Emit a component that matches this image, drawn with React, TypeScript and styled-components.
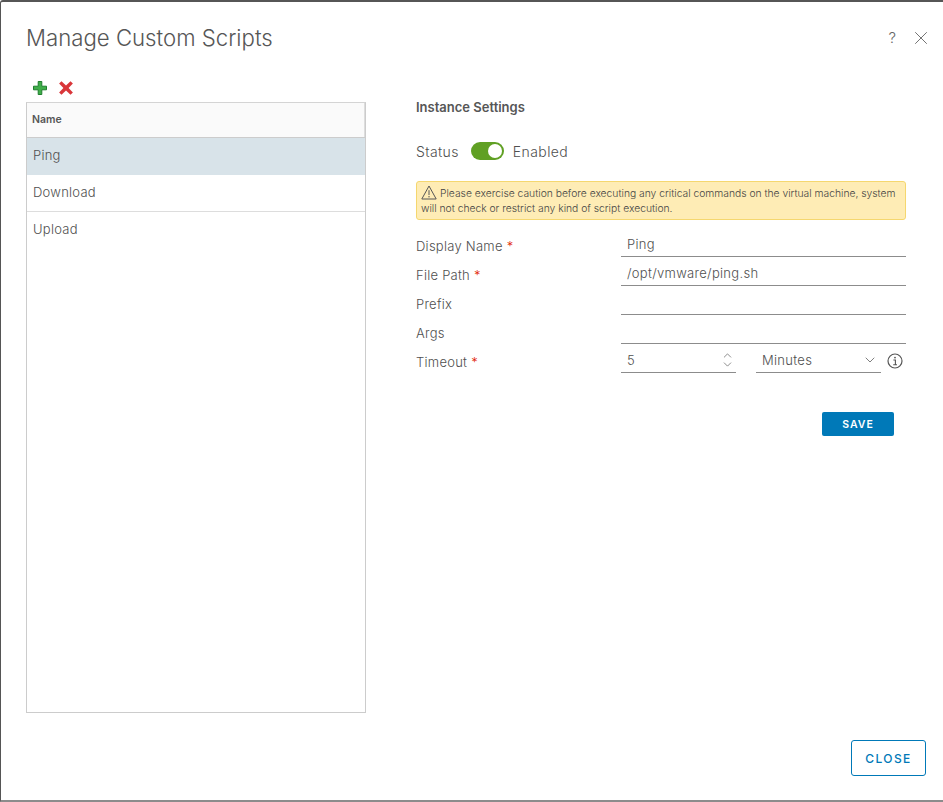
import React from "react";
import styled, { createGlobalStyle } from "styled-components";
import { ChevronDown, ChevronUp, X } from "lucide-react";

const GlobalStyle = createGlobalStyle`
  html, body {
    margin: 0;
    padding: 0;
    background: #fff;
  }
  * {
    box-sizing: border-box;
  }
`;

const Frame = styled.div`
  width: 943px;
  height: 802px;
  display: flex;
  flex-direction: column;
  background: #fff;
  border-top: 2px solid #565656;
  border-left: 1px solid #555;
  border-bottom: 2px solid #8c8c8c;
  border-top-left-radius: 3px;
  font-family: "Inter", "Liberation Sans", sans-serif;
  color: #505050;
  overflow: hidden;
`;

const Header = styled.header`
  height: 72px;
  flex: none;
  display: flex;
  align-items: center;
  justify-content: space-between;
  padding: 0 11px 1px 25px;
`;

const Title = styled.h1`
  margin: 0;
  font-size: 22.2px;
  font-weight: 300;
  color: #565656;
`;

const HeaderIcons = styled.div`
  display: flex;
  align-items: center;
  gap: 14px;
  color: #666;
  font-size: 15px;
  font-weight: 300;
`;

const Body = styled.div`
  flex: 1;
  min-height: 0;
  display: flex;
  gap: 50px;
  padding-left: 25px;
`;

const LeftColumn = styled.section`
  width: 340px;
  display: flex;
  flex-direction: column;
`;

const Toolbar = styled.div`
  height: 28px;
  display: flex;
  align-items: center;
  gap: 10px;
  padding-left: 6px;
`;

const Grid = styled.div`
  height: 611px;
  border: 1px solid #ccc;
  border-top-color: #d4d4d4;
  display: flex;
  flex-direction: column;
`;

const GridHead = styled.div`
  height: 35px;
  flex: none;
  display: flex;
  align-items: center;
  padding: 0 0 1px 5px;
  background: #fafafa;
  border-bottom: 1px solid #ccc;
  font-size: 10.5px;
  font-weight: 600;
  color: #565656;
  box-shadow: inset -1px 0 0 #ddd;
`;

const GridRow = styled.div<{ $selected?: boolean }>`
  height: 37px;
  flex: none;
  display: flex;
  align-items: center;
  padding: 0 0 3px 6px;
  font-size: 13px;
  font-weight: 300;
  letter-spacing: 0.25px;
  background: ${(p) => (p.$selected ? "#d8e3e9" : "#fff")};
  border-bottom: ${(p) => (p.$selected ? "none" : "1px solid #ddd")};
  &:last-child {
    border-bottom: none;
  }
`;

const RightColumn = styled.section`
  width: 490px;
  display: flex;
  flex-direction: column;
  padding-top: 24px;
`;

const SectionTitle = styled.h2`
  margin: 0;
  font-size: 13px;
  line-height: 18px;
  font-weight: 600;
  color: #565656;
`;

const StatusRow = styled.div`
  display: flex;
  align-items: center;
  height: 20px;
  margin-top: 25px;
  font-size: 14px;
  font-weight: 300;
  letter-spacing: 0.4px;
`;

const Toggle = styled.span`
  width: 33px;
  height: 18px;
  margin: 0 9px 0 12px;
  border-radius: 9px;
  background: #60a024;
  display: flex;
  align-items: center;
  justify-content: flex-end;
  padding-right: 2px;
  &::after {
    content: "";
    width: 14px;
    height: 14px;
    border-radius: 50%;
    background: #fff;
  }
`;

const Alert = styled.div`
  margin-top: 20px;
  height: 39px;
  padding: 3px 4px 0 4px;
  background: #feecb5;
  border: 1px solid #f5d76f;
  border-radius: 3px;
  font-size: 10.3px;
  font-weight: 300;
  line-height: 15px;
  color: #444;
`;

const AlertIcon = styled.svg`
  width: 16px;
  height: 15px;
  vertical-align: -3px;
  margin-right: 3px;
`;

const Form = styled.div`
  margin-top: 8px;
  display: flex;
  flex-direction: column;
`;

const FormRow = styled.div`
  height: 29px;
  display: grid;
  grid-template-columns: 205px 285px;
  align-items: stretch;
`;

const Label = styled.label`
  font-size: 13px;
  font-weight: 300;
  letter-spacing: 0.25px;
  align-self: end;
  padding-bottom: 2px;
  line-height: 18px;
`;

const Req = styled.span`
  color: #e12200;
  margin-left: 4px;
`;

const Underlined = styled.div<{ $width?: number }>`
  width: ${(p) => (p.$width ? `${p.$width}px` : "auto")};
  display: flex;
  align-items: center;
  justify-content: space-between;
  padding: 3px 6px 0;
  border-bottom: 1px solid #8c8c8c;
  font-size: 13px;
  font-weight: 300;
  letter-spacing: 0.3px;
  line-height: 18px;
`;

const TimeoutFields = styled.div`
  display: flex;
  align-items: stretch;
`;

const Stepper = styled.span`
  display: flex;
  flex-direction: column;
  margin: 0 -4px 0 0;
  color: #505050;
  & > svg + svg {
    margin-top: -4px;
  }
`;

const UnitChevron = styled(ChevronDown)`
  margin-right: -3px;
  color: #505050;
`;

const UnitField = styled(Underlined)`
  margin-left: 20px;
`;

const InfoIcon = styled.svg`
  width: 16px;
  height: 16px;
  margin: 4px 0 0 6px;
  align-self: center;
`;

const SaveRow = styled.div`
  display: flex;
  justify-content: flex-end;
  margin-top: 39px;
  padding-right: 12px;
`;

const SaveButton = styled.button`
  width: 72px;
  height: 24px;
  border: none;
  border-radius: 2px;
  background: #0079b8;
  color: #fff;
  font-family: inherit;
  font-size: 10.5px;
  font-weight: 600;
  letter-spacing: 1px;
  padding: 0;
`;

const Footer = styled.footer`
  height: 60px;
  flex: none;
  display: flex;
  justify-content: flex-end;
  padding: 0 17px 0 0;
  align-items: flex-start;
`;

const CloseButton = styled.button`
  width: 75px;
  height: 36px;
  border: 1px solid #0079b8;
  border-radius: 3px;
  background: #fff;
  color: #0079b8;
  font-family: inherit;
  font-size: 12px;
  font-weight: 500;
  letter-spacing: 1.4px;
  padding: 0;
`;

function App() {
  return (
    <Frame>
      <GlobalStyle />
      <Header>
        <Title>Manage Custom Scripts</Title>
        <HeaderIcons>
          <span>?</span>
          <X size={22} strokeWidth={1} />
        </HeaderIcons>
      </Header>
      <Body>
        <LeftColumn>
          <Toolbar>
            <svg width="16" height="16" viewBox="0 0 16 16">
              <path
                d="M6.2 1.5h3.6v4.7h4.7v3.6H9.8v4.7H6.2V9.8H1.5V6.2h4.7z"
                fill="#3fae49"
                stroke="#1e7d2d"
                strokeWidth="1"
              />
            </svg>
            <svg width="16" height="16" viewBox="0 0 16 16">
              <path
                d="M3.5 1.2 8 5.4l4.5-4.2 2.4 2.4L10.6 8l4.3 4.4-2.4 2.4L8 10.6l-4.5 4.2-2.4-2.4L5.4 8 1.1 3.6z"
                fill="#d9363a"
              />
            </svg>
          </Toolbar>
          <Grid>
            <GridHead>Name</GridHead>
            <GridRow $selected>Ping</GridRow>
            <GridRow>Download</GridRow>
            <GridRow>Upload</GridRow>
          </Grid>
        </LeftColumn>
        <RightColumn>
          <SectionTitle>Instance Settings</SectionTitle>
          <StatusRow>
            Status
            <Toggle />
            Enabled
          </StatusRow>
          <Alert>
            <AlertIcon viewBox="0 0 16 15">
              <path
                d="M8 1 15.2 14H.8z"
                fill="none"
                stroke="#565656"
                strokeWidth="1"
                strokeLinejoin="round"
              />
              <path d="M8 5.2v4.8" stroke="#565656" strokeWidth="1" />
              <circle cx="8" cy="11.8" r="0.7" fill="#565656" />
            </AlertIcon>
            Please exercise caution before executing any critical commands on the virtual machine, system will not check or restrict any kind of script execution.
          </Alert>
          <Form>
            <FormRow>
              <Label>
                Display Name<Req>*</Req>
              </Label>
              <Underlined>Ping</Underlined>
            </FormRow>
            <FormRow>
              <Label>
                File Path<Req>*</Req>
              </Label>
              <Underlined>/opt/vmware/ping.sh</Underlined>
            </FormRow>
            <FormRow>
              <Label>Prefix</Label>
              <Underlined />
            </FormRow>
            <FormRow>
              <Label>Args</Label>
              <Underlined />
            </FormRow>
            <FormRow>
              <Label>
                Timeout<Req>*</Req>
              </Label>
              <TimeoutFields>
                <Underlined $width={115}>
                  5
                  <Stepper>
                    <ChevronUp size={13} strokeWidth={1.2} />
                    <ChevronDown size={13} strokeWidth={1.2} />
                  </Stepper>
                </Underlined>
                <UnitField $width={125}>
                  Minutes
                  <UnitChevron size={16} strokeWidth={1.1} />
                </UnitField>
                <InfoIcon viewBox="0 0 16 16">
                  <circle cx="8" cy="8" r="7" fill="none" stroke="#565656" strokeWidth="1.2" />
                  <circle cx="8" cy="4.6" r="0.9" fill="#565656" />
                  <path d="M6.4 7h2v4.6M6.2 11.8h3.8" fill="none" stroke="#565656" strokeWidth="1.1" />
                </InfoIcon>
              </TimeoutFields>
            </FormRow>
          </Form>
          <SaveRow>
            <SaveButton>SAVE</SaveButton>
          </SaveRow>
        </RightColumn>
      </Body>
      <Footer>
        <CloseButton>CLOSE</CloseButton>
      </Footer>
    </Frame>
  );
}

export default App;
